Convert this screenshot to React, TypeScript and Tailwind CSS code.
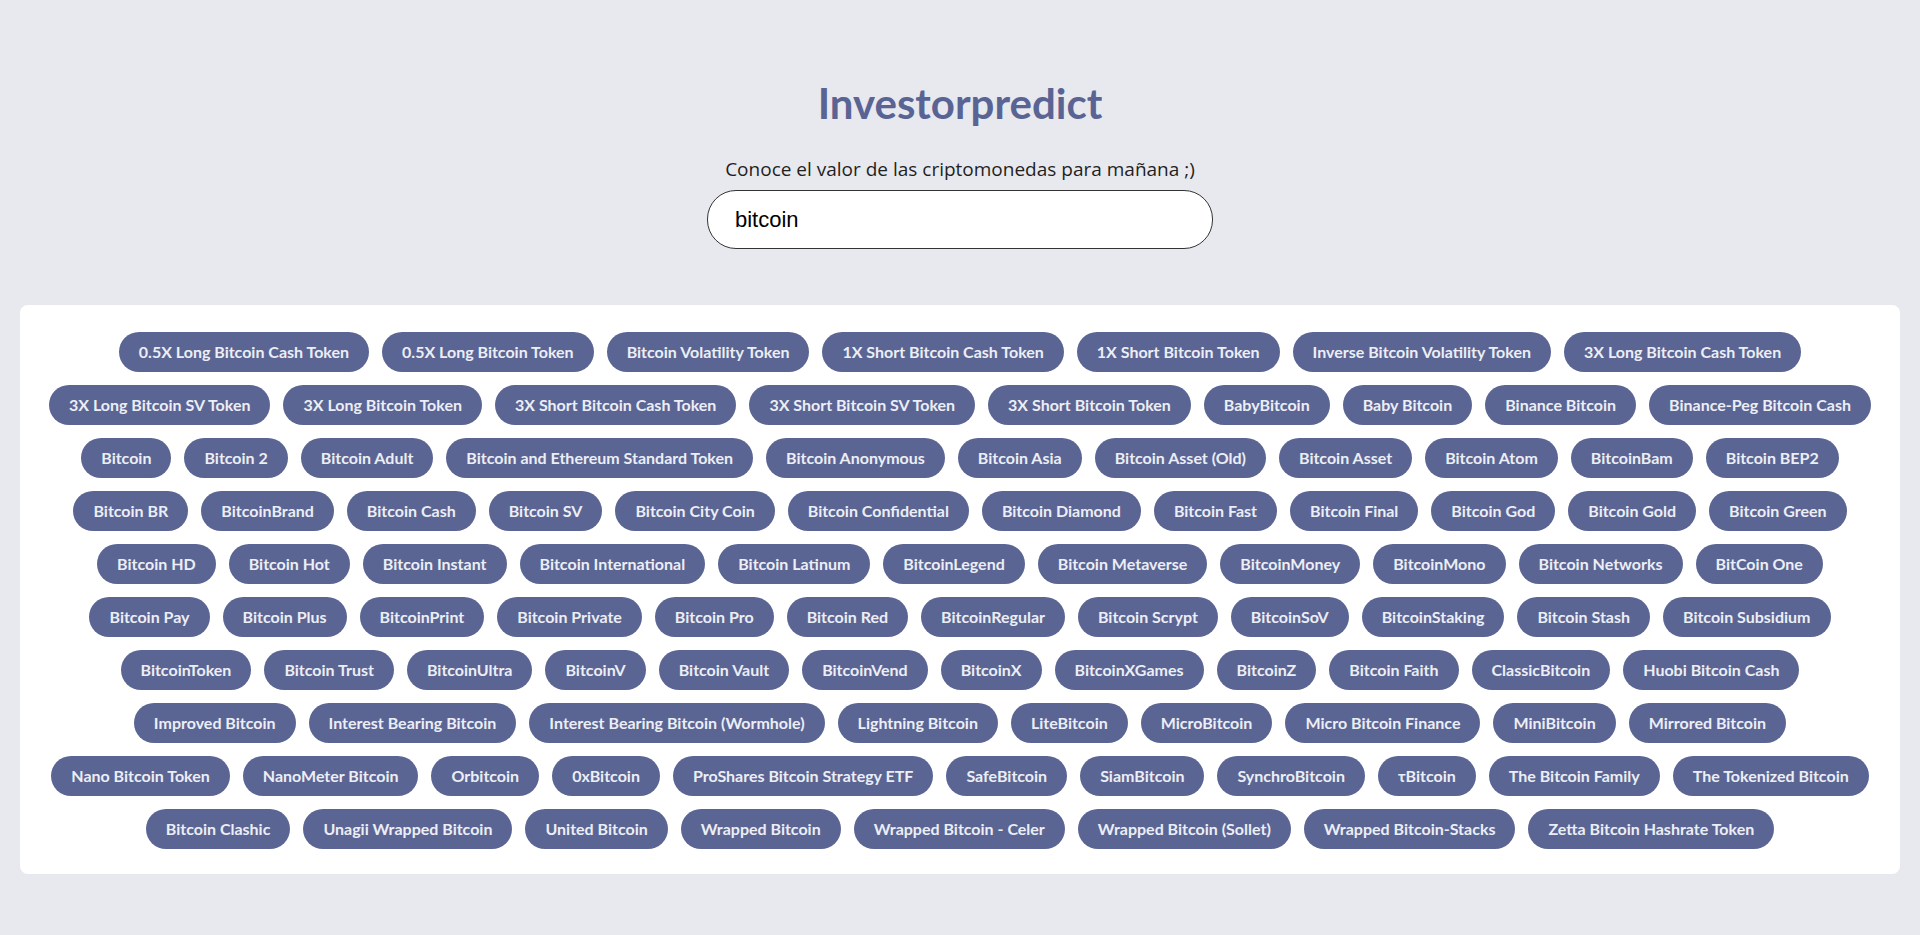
const ROWS: string[][] = [
  ["0.5X Long Bitcoin Cash Token", "0.5X Long Bitcoin Token", "Bitcoin Volatility Token", "1X Short Bitcoin Cash Token", "1X Short Bitcoin Token", "Inverse Bitcoin Volatility Token", "3X Long Bitcoin Cash Token"],
  ["3X Long Bitcoin SV Token", "3X Long Bitcoin Token", "3X Short Bitcoin Cash Token", "3X Short Bitcoin SV Token", "3X Short Bitcoin Token", "BabyBitcoin", "Baby Bitcoin", "Binance Bitcoin", "Binance-Peg Bitcoin Cash"],
  ["Bitcoin", "Bitcoin 2", "Bitcoin Adult", "Bitcoin and Ethereum Standard Token", "Bitcoin Anonymous", "Bitcoin Asia", "Bitcoin Asset (Old)", "Bitcoin Asset", "Bitcoin Atom", "BitcoinBam", "Bitcoin BEP2"],
  ["Bitcoin BR", "BitcoinBrand", "Bitcoin Cash", "Bitcoin SV", "Bitcoin City Coin", "Bitcoin Confidential", "Bitcoin Diamond", "Bitcoin Fast", "Bitcoin Final", "Bitcoin God", "Bitcoin Gold", "Bitcoin Green"],
  ["Bitcoin HD", "Bitcoin Hot", "Bitcoin Instant", "Bitcoin International", "Bitcoin Latinum", "BitcoinLegend", "Bitcoin Metaverse", "BitcoinMoney", "BitcoinMono", "Bitcoin Networks", "BitCoin One"],
  ["Bitcoin Pay", "Bitcoin Plus", "BitcoinPrint", "Bitcoin Private", "Bitcoin Pro", "Bitcoin Red", "BitcoinRegular", "Bitcoin Scrypt", "BitcoinSoV", "BitcoinStaking", "Bitcoin Stash", "Bitcoin Subsidium"],
  ["BitcoinToken", "Bitcoin Trust", "BitcoinUltra", "BitcoinV", "Bitcoin Vault", "BitcoinVend", "BitcoinX", "BitcoinXGames", "BitcoinZ", "Bitcoin Faith", "ClassicBitcoin", "Huobi Bitcoin Cash"],
  ["Improved Bitcoin", "Interest Bearing Bitcoin", "Interest Bearing Bitcoin (Wormhole)", "Lightning Bitcoin", "LiteBitcoin", "MicroBitcoin", "Micro Bitcoin Finance", "MiniBitcoin", "Mirrored Bitcoin"],
  ["Nano Bitcoin Token", "NanoMeter Bitcoin", "Orbitcoin", "0xBitcoin", "ProShares Bitcoin Strategy ETF", "SafeBitcoin", "SiamBitcoin", "SynchroBitcoin", "τBitcoin", "The Bitcoin Family", "The Tokenized Bitcoin"],
  ["Bitcoin Clashic", "Unagii Wrapped Bitcoin", "United Bitcoin", "Wrapped Bitcoin", "Wrapped Bitcoin - Celer", "Wrapped Bitcoin (Sollet)", "Wrapped Bitcoin-Stacks", "Zetta Bitcoin Hashrate Token"],
];

export default function App() {
  return (
    <div className="min-h-screen bg-[#e8e9ee] font-['Lato','Noto_Sans',sans-serif]">
      <div className="flex flex-col items-center pt-[78px]">
        <h1 className="text-[42px] leading-[50px] font-bold text-[#5a6494]">Investorpredict</h1>
        <p className="mt-[29px] text-[19px] leading-[24px] text-[#1f1f1f] font-['Open_Sans',sans-serif]">Conoce el valor de las criptomonedas para mañana ;)</p>
        <input
          defaultValue="bitcoin"
          className="mt-[9px] w-[506px] h-[59px] rounded-[29px] border border-[#333] bg-white pl-[27px] text-[22px] text-black font-['Liberation_Sans',Arial,sans-serif] outline-none"
        />
      </div>

      <div className="mx-[20px] mt-[56px] bg-white rounded-[8px] pt-[27px] pb-[25px] flex flex-col gap-[13px]">
        {ROWS.map((row, i) => (
          <div key={i} className="flex justify-center gap-[13px]">
            {row.map((name) => (
              <span
                key={name}
                className="h-[40px] px-[20px] rounded-full bg-[#5b6594] text-[#eceef5] text-[16px] font-bold flex items-center whitespace-nowrap"
              >
                {name}
              </span>
            ))}
          </div>
        ))}
      </div>
    </div>
  );
}
